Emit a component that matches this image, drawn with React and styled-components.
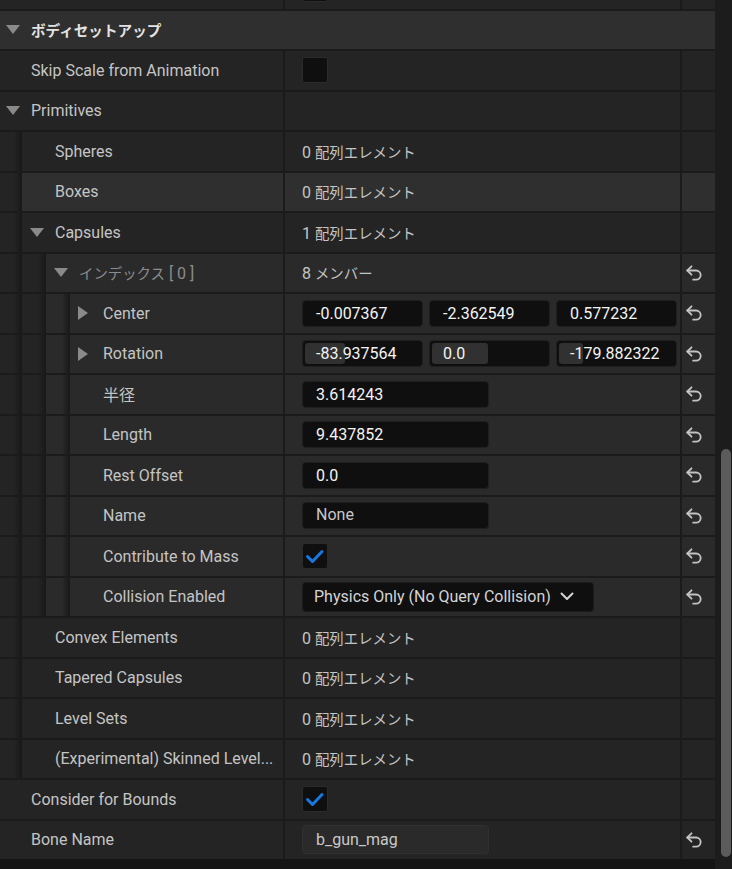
import React from "react";
import styled, { createGlobalStyle } from "styled-components";
import { Undo2 } from "lucide-react";

const GlobalStyle = createGlobalStyle`
  html, body { margin: 0; padding: 0; background: #1a1a1a; overflow: hidden; }
  body { font-family: Roboto, "Noto Sans CJK JP", sans-serif; -webkit-font-smoothing: antialiased; }
  #root { width: 732px; height: 869px; }
`;

const DEPTH_BG = ["#242424", "#242424", "#2a2a2a", "#2a2a2a"];

const Window = styled.div`
  display: flex;
  width: 732px;
  height: 869px;
  overflow: hidden;
  background: #1a1a1a;
`;

const Panel = styled.div`
  flex: 1;
  min-width: 0;
  display: flex;
  flex-direction: column;
  overflow: hidden;
  background: #151515;
`;

const List = styled.div`
  display: flex;
  flex-direction: column;
  gap: 2px;
  margin: -30px 0 0 -2px;
  background: #1b1b1b;
`;

const Row = styled.div`
  display: grid;
  grid-template-columns: 285px 1fr 33px;
  column-gap: 2px;
  height: 38.5px;
  flex: none;
`;

const HeaderRow = styled.div`
  display: flex;
  align-items: center;
  height: 38.5px;
  flex: none;
  padding-left: 8px;
  background: #2f2f2f;
`;

const HeaderText = styled.span`
  font-family: "Noto Sans CJK JP", sans-serif;
  font-weight: 700;
  font-size: 14.6px;
  color: #e2e2e2;
`;

const NameCell = styled.div`
  display: flex;
  min-width: 0;
`;

const Band = styled.div`
  width: 24px;
  flex: none;
  background: linear-gradient(90deg, ${(p) => p.$bg} 0, ${(p) => p.$bg} 16px, #181818 24px);
`;

const NameInner = styled.div`
  flex: 1;
  min-width: 0;
  display: flex;
  align-items: center;
  padding-left: 8px;
  background: ${(p) => p.$bg};
`;

const ToggleSlot = styled.div`
  width: 25px;
  flex: none;
  display: flex;
  align-items: center;
`;

const Label = styled.span`
  font-size: 16px;
  color: ${(p) => (p.$dim ? "#8c8c8c" : "#c4c4c4")};
  white-space: nowrap;
  overflow: hidden;
`;

const Jp = styled.span`
  font-family: "Noto Sans CJK JP", sans-serif;
  font-size: ${(p) => p.$size || 14.4}px;
`;

const ValueCell = styled.div`
  display: flex;
  align-items: center;
  gap: 6px;
  padding: 0 3px 0 17px;
  min-width: 0;
  background: ${(p) => p.$bg};
`;

const ValueText = styled.span`
  font-size: 16px;
  color: #c4c4c4;
  white-space: nowrap;
`;

const ResetCell = styled.div`
  display: flex;
  align-items: center;
  padding-left: 2px;
  color: #c2c2c2;
  background: ${(p) => p.$bg};
`;

const NumBox = styled.div`
  position: relative;
  box-sizing: border-box;
  height: 27px;
  ${(p) => (p.$width ? `width: ${p.$width}px; flex: none;` : "flex: 1;")}
  display: flex;
  align-items: center;
  padding-left: 13px;
  padding-bottom: ${(p) => (p.$raised ? 3 : 0)}px;
  background: #0f0f0f;
  border: 1px solid #1f1f1f;
  border-radius: 4px;
  overflow: hidden;
`;

const Fill = styled.div`
  position: absolute;
  left: 2px;
  top: 2px;
  bottom: 2px;
  border-radius: 3px;
  background: #313131;
`;

const NumText = styled.span`
  position: relative;
  font-size: 16px;
  color: ${(p) => (p.$muted ? "#c8c8c8" : "#f4f4f4")};
  white-space: nowrap;
`;

const BoneBox = styled(NumBox)`
  height: 29px;
  background: #2a2a2a;
  border-color: #303030;
`;

const CheckBox = styled.div`
  box-sizing: border-box;
  width: 26px;
  height: 26px;
  background: #0f0f0f;
  border: 1px solid #2b2b2b;
  border-radius: 3px;
  display: flex;
  align-items: center;
  justify-content: center;
`;

const Combo = styled.div`
  box-sizing: border-box;
  height: 30px;
  display: flex;
  align-items: center;
  gap: 9px;
  padding: 0 19px 0 11px;
  background: #0f0f0f;
  border: 1px solid #1c1c1c;
  border-radius: 4px;
  font-size: 16px;
  color: #d4d4d4;
  white-space: nowrap;
`;

const ScrollTrack = styled.div`
  width: 17px;
  flex: none;
  box-sizing: border-box;
  display: flex;
  flex-direction: column;
  padding: 449px 1px 0 6px;
  background: #1c1c1c;
`;

const Thumb = styled.div`
  height: 408px;
  border-radius: 5px;
  background: #5b5b5b;
`;

function Caret({ dir }) {
  if (dir === "right") {
    return (
      <svg width="10" height="14" viewBox="0 0 10 14">
        <polygon points="0,0 10,7 0,14" fill="#8a8a8a" />
      </svg>
    );
  }
  return (
    <svg width="14" height="9" viewBox="0 0 14 9">
      <polygon points="0,0 14,0 7,9" fill="#8a8a8a" />
    </svg>
  );
}

function Check({ checked }) {
  return (
    <CheckBox>
      {checked && (
        <svg width="22" height="22" viewBox="0 0 22 22">
          <polyline
            points="3.5,11.5 8.5,16.5 18,6.5"
            fill="none"
            stroke="#1778e2"
            strokeWidth="3"
            strokeLinecap="round"
            strokeLinejoin="round"
          />
        </svg>
      )}
    </CheckBox>
  );
}

function PropRow({ level = 0, label, toggle, hover, reset, dim, children }) {
  const bg = hover ? "#2f2f2f" : DEPTH_BG[level];
  return (
    <Row>
      <NameCell>
        {Array.from({ length: level }).map((_, i) => (
          <Band key={i} $bg={DEPTH_BG[i]} />
        ))}
        <NameInner $bg={bg}>
          <ToggleSlot>{toggle && <Caret dir={toggle} />}</ToggleSlot>
          {label && <Label $dim={dim}>{label}</Label>}
        </NameInner>
      </NameCell>
      <ValueCell $bg={bg}>{children}</ValueCell>
      <ResetCell $bg={bg}>{reset && <Undo2 size={20} strokeWidth={2.2} />}</ResetCell>
    </Row>
  );
}

const ArrayCount = ({ n }) => (
  <ValueText>
    {n} <Jp>配列エレメント</Jp>
  </ValueText>
);

export default function App() {
  return (
    <>
      <GlobalStyle />
      <Window>
        <Panel>
          <List>
            <PropRow>
              <Check checked={false} />
            </PropRow>
            <HeaderRow>
              <ToggleSlot>
                <Caret dir="down" />
              </ToggleSlot>
              <HeaderText>ボディセットアップ</HeaderText>
            </HeaderRow>
            <PropRow label="Skip Scale from Animation">
              <Check checked={false} />
            </PropRow>
            <PropRow label="Primitives" toggle="down" />
            <PropRow level={1} label="Spheres">
              <ArrayCount n="0" />
            </PropRow>
            <PropRow level={1} label="Boxes" hover>
              <ArrayCount n="0" />
            </PropRow>
            <PropRow level={1} label="Capsules" toggle="down">
              <ArrayCount n="1" />
            </PropRow>
            <PropRow
              level={2}
              toggle="down"
              dim
              reset
              label={
                <>
                  <Jp>インデックス</Jp> [ 0 ]
                </>
              }
            >
              <ValueText>
                8 <Jp>メンバー</Jp>
              </ValueText>
            </PropRow>
            <PropRow level={3} label="Center" toggle="right" reset>
              <NumBox>
                <NumText>-0.007367</NumText>
              </NumBox>
              <NumBox>
                <NumText>-2.362549</NumText>
              </NumBox>
              <NumBox>
                <NumText>0.577232</NumText>
              </NumBox>
            </PropRow>
            <PropRow level={3} label="Rotation" toggle="right" reset>
              <NumBox>
                <Fill style={{ width: 40 }} />
                <NumText>-83.937564</NumText>
              </NumBox>
              <NumBox>
                <Fill style={{ width: 56 }} />
                <NumText>0.0</NumText>
              </NumBox>
              <NumBox>
                <Fill style={{ width: 24 }} />
                <NumText>-179.882322</NumText>
              </NumBox>
            </PropRow>
            <PropRow level={3} label={<Jp $size={16}>半径</Jp>} reset>
              <NumBox $width={187}>
                <NumText>3.614243</NumText>
              </NumBox>
            </PropRow>
            <PropRow level={3} label="Length" reset>
              <NumBox $width={187}>
                <NumText>9.437852</NumText>
              </NumBox>
            </PropRow>
            <PropRow level={3} label="Rest Offset" reset>
              <NumBox $width={187}>
                <NumText>0.0</NumText>
              </NumBox>
            </PropRow>
            <PropRow level={3} label="Name" reset>
              <NumBox $width={187} $raised>
                <NumText $muted>None</NumText>
              </NumBox>
            </PropRow>
            <PropRow level={3} label="Contribute to Mass" reset>
              <Check checked />
            </PropRow>
            <PropRow level={3} label="Collision Enabled" reset>
              <Combo>
                Physics Only (No Query Collision)
                <svg width="14" height="9" viewBox="0 0 14 9">
                  <polyline
                    points="1.5,1.5 7,7 12.5,1.5"
                    fill="none"
                    stroke="#d4d4d4"
                    strokeWidth="2"
                    strokeLinecap="round"
                    strokeLinejoin="round"
                  />
                </svg>
              </Combo>
            </PropRow>
            <PropRow level={1} label="Convex Elements">
              <ArrayCount n="0" />
            </PropRow>
            <PropRow level={1} label="Tapered Capsules">
              <ArrayCount n="0" />
            </PropRow>
            <PropRow level={1} label="Level Sets">
              <ArrayCount n="0" />
            </PropRow>
            <PropRow level={1} label="(Experimental) Skinned Level...">
              <ArrayCount n="0" />
            </PropRow>
            <PropRow label="Consider for Bounds">
              <Check checked />
            </PropRow>
            <PropRow label="Bone Name" reset>
              <BoneBox $width={187}>
                <NumText $muted>b_gun_mag</NumText>
              </BoneBox>
            </PropRow>
          </List>
        </Panel>
        <ScrollTrack>
          <Thumb />
        </ScrollTrack>
      </Window>
    </>
  );
}
